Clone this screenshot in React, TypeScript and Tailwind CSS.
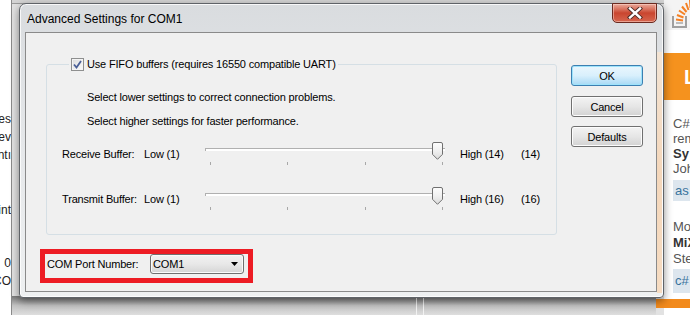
import React from "react";

function Thumb() {
  return (
    <svg width="11" height="18" viewBox="0 0 11 18" className="absolute left-[227px] top-0">
      <defs>
        <linearGradient id="thumbg" x1="0" y1="0" x2="0" y2="1">
          <stop offset="0" stopColor="#fdfdfd" />
          <stop offset="0.5" stopColor="#f0f0f0" />
          <stop offset="1" stopColor="#dadada" />
        </linearGradient>
      </defs>
      <path
        d="M2 0.5H9Q10.5 0.5 10.5 2V12.3L5.5 17.3L0.5 12.3V2Q0.5 0.5 2 0.5Z"
        fill="url(#thumbg)"
        stroke="#707070"
      />
    </svg>
  );
}

function Slider() {
  return (
    <div className="relative w-[240px] h-[24px]">
      <div className="mt-[6px] h-[3px] border-t border-l border-[#b0b0b0] bg-white" />
      <div className="ml-[5px] mt-[11px] flex w-[233px] justify-between">
        <div className="h-[3px] w-px bg-[#a8a8a8]" />
        <div className="h-[3px] w-px bg-[#a8a8a8]" />
        <div className="h-[3px] w-px bg-[#a8a8a8]" />
        <div className="h-[3px] w-px bg-[#a8a8a8]" />
      </div>
      <Thumb />
    </div>
  );
}

function Row({ label, high, val }: { label: string; high: string; val: string }) {
  return (
    <div className="flex h-[24px] items-start pl-[15px]">
      <div className="mt-[5px] w-[82px] leading-[14px]">{label}</div>
      <div className="mt-[5px] w-[61px] leading-[14px]">Low (1)</div>
      <Slider />
      <div className="ml-[15px] mt-[5px] w-[61px] leading-[14px]">{high}</div>
      <div className="mt-[5px] leading-[14px]">{val}</div>
    </div>
  );
}

function Btn({ children, primary }: { children: React.ReactNode; primary?: boolean }) {
  return (
    <div
      className={
        primary
          ? "flex h-[21px] w-[72px] items-center justify-center rounded-[3px] border border-[#3c7fb1] bg-gradient-to-b from-[#eaf6fd] via-[#d9f0fc] to-[#a7d9f5] shadow-[inset_0_0_0_1px_#9ee3fb]"
          : "flex h-[21px] w-[72px] items-center justify-center rounded-[3px] border border-[#707070] bg-gradient-to-b from-[#f3f3f3] via-[#e6e6e6] to-[#d2d2d2] shadow-[inset_0_0_0_1px_#fcfcfc]"
      }
    >
      <span className="leading-[14px]">{children}</span>
    </div>
  );
}

export default function App() {
  return (
    <div className="relative h-[315px] w-[690px] overflow-hidden bg-[#e2e2e2] font-['Liberation_Sans',Arial,sans-serif] text-[11px] tracking-[-0.17px] text-black">
      {/* top strip of window behind */}
      <div className="absolute left-[12px] right-0 top-0 h-[4px] border-b border-[#9a9a9a] bg-[#d4d4d4]" />

      {/* left window behind */}
      <div className="absolute left-0 top-0 flex h-full w-[12px] flex-col items-end overflow-hidden border-r border-[#8a8a8a] bg-white text-[12px] tracking-normal text-[#222]">
        <div className="mt-[111px] whitespace-nowrap leading-[16px]">es</div>
        <div className="mt-[2px] whitespace-nowrap leading-[16px]">ev</div>
        <div className="mt-[2px] whitespace-nowrap leading-[16px]">ntı</div>
        <div className="mt-[39px] whitespace-nowrap leading-[16px]">int</div>
        <div className="mt-[37px] whitespace-nowrap leading-[16px]">0</div>
        <div className="mt-[2px] whitespace-nowrap leading-[16px]">CO</div>
      </div>

      {/* right window behind */}
      <div className="absolute left-[664px] right-0 top-0 h-full bg-white text-[13px] tracking-normal">
        <div className="relative h-[30px] bg-[#f4f4f4]">
          <svg width="26" height="30" viewBox="0 0 26 30" className="absolute left-[4px] top-0">
            <path d="M5 16V27H18V16" fill="none" stroke="#a0a0a0" strokeWidth="2" />
            <path d="M8 23H15" stroke="#bcbbbb" strokeWidth="2" />
            <path d="M8 19.5L15 20.5" stroke="#f48024" strokeWidth="2" />
            <path d="M9 15L15.5 17.5" stroke="#f48024" strokeWidth="2" />
            <path d="M11 10.5L17 14.5" stroke="#f48024" strokeWidth="2" />
            <path d="M14 6.5L18.5 12" stroke="#f48024" strokeWidth="2" />
            <path d="M18 3L20.5 10" stroke="#f48024" strokeWidth="2" />
            <path d="M22 0L22.5 8" stroke="#f48024" strokeWidth="2" />
          </svg>
        </div>
        <div className="mt-[23px] h-[47px] bg-[#f5921e] pl-[20px] pt-[14px] text-[20px] font-bold leading-[20px] text-white">
          L
        </div>
        <div className="pl-[9px] pt-[16px] text-[#555]">
          <div className="leading-[15px]">C#</div>
          <div className="leading-[15px]">rem</div>
          <div className="font-bold leading-[15px] text-[#333]">Sy</div>
          <div className="leading-[15px]">Joh</div>
          <div className="mt-[4px] h-[21px] bg-[#dde6ee] pl-[2px] leading-[21px] text-[#39739d]">as</div>
          <div className="mt-[18px] leading-[16px]">Mo</div>
          <div className="font-bold leading-[16px] text-[#333]">MiX</div>
          <div className="leading-[16px]">Ste</div>
          <div className="mt-[2px] h-[24px] bg-[#dde6ee] pl-[2px] leading-[24px] text-[#39739d]">c#</div>
        </div>
      </div>
      {/* orange frame piece bottom right */}
      <div className="absolute left-[656px] right-0 top-[299px] h-[9px] bg-[#f28a1c]" />

      {/* bottom shadow area */}
      <div className="absolute left-[12px] right-[34px] top-[296px] bottom-0 bg-gradient-to-b from-[#7a7a7a] via-[#c2c2c2] to-[#dedede]">
        <div className="ml-[404px] flex h-full gap-[6px]">
          <div className="h-full w-px bg-[#f2f2f2]" />
          <div className="h-full w-px bg-[#f2f2f2]" />
        </div>
      </div>

      {/* dialog */}
      <div className="absolute left-[19px] top-[3px] flex h-[295px] w-[645px] flex-col rounded-t-[7px] rounded-b-[4px] border border-[#5f6368] bg-gradient-to-b from-[#d9dcdf] via-[#e6e8ea] to-[#eef0f1] shadow-[0_3px_8px_rgba(0,0,0,0.45),inset_0_0_0_1px_rgba(255,255,255,0.8)]">
        {/* orange tint from window behind */}
        <div className="absolute right-[1px] top-[48px] bottom-[4px] w-[5px] bg-gradient-to-b from-[#f3e4d4] via-[#f4d7bb] to-[#f6dcc2]" />
        {/* title bar */}
        <div className="flex h-[28px] items-center pl-[7px] pt-[1px]">
          <span className="text-[12px] tracking-normal text-black">Advanced Settings for COM1</span>
        </div>
        {/* close button */}
        <div className="absolute left-[592px] top-[-1px] flex h-[20px] w-[45px] items-center justify-center rounded-b-[5px] border border-[#6b2a20] bg-gradient-to-b from-[#e9a99b] via-[#c9452f] to-[#d6664f] shadow-[inset_0_0_0_1px_rgba(255,220,210,0.5)]">
          <svg width="16" height="12" viewBox="0 0 16 12">
            <path d="M3 1.5L13 10.5M13 1.5L3 10.5" stroke="#4a2a25" strokeWidth="4.2" strokeLinecap="square" />
            <path d="M3 1.5L13 10.5M13 1.5L3 10.5" stroke="#ffffff" strokeWidth="2.4" strokeLinecap="square" />
          </svg>
        </div>

        {/* client */}
        <div className="ml-[5px] mr-[6px] flex h-[260px] border border-[#8a8a8a] bg-[#f0f0f0]">
          <div className="flex flex-col pl-[14px] pt-[24px]">
            <fieldset className="ml-[6px] h-[178px] w-[511px] rounded-[3px] border border-[#d5dfe5]">
              <legend className="ml-[22px] flex items-center gap-[3px] px-[2px] leading-[14px]">
                <span className="flex h-[13px] w-[13px] items-center justify-center border border-[#8e8f8f] bg-gradient-to-br from-[#dcdcdc] to-[#fbfbfb] shadow-[inset_0_0_0_1px_#f4f4f4]">
                  <svg width="9" height="9" viewBox="0 0 9 9">
                    <path d="M1 4.5L3.5 7.5L8 1" fill="none" stroke="#4a5f97" strokeWidth="1.8" />
                  </svg>
                </span>
                <span>Use FIFO buffers (requires 16550 compatible UART)</span>
              </legend>
              <div className="pl-[40px] pt-[19px] leading-[14px]">
                <div>Select lower settings to correct connection problems.</div>
                <div className="mt-[10px]">Select higher settings for faster performance.</div>
              </div>
              <div className="mt-[14px]">
                <Row label="Receive Buffer:" high="High (14)" val="(14)" />
              </div>
              <div className="mt-[21px]">
                <Row label="Transmit Buffer:" high="High (16)" val="(16)" />
              </div>
            </fieldset>
            <div className="mt-[14px] flex h-[34px] w-[213px] items-start border-[5px] border-[#ed1c24] pl-[2px]">
              <div className="mt-[3px] w-[103px] leading-[14px]">COM Port Number:</div>
              <div className="flex h-[20px] w-[94px] items-center justify-between rounded-[3px] border border-[#707070] bg-gradient-to-b from-[#f2f2f2] via-[#e8e8e8] to-[#d5d5d5] pl-[2px] pr-[5px] shadow-[inset_0_0_0_1px_#fafafa]">
                <span className="leading-[14px]">COM1</span>
                <svg width="7" height="4" viewBox="0 0 7 4">
                  <path d="M0 0H7L3.5 4Z" fill="#000" />
                </svg>
              </div>
            </div>
          </div>
          <div className="ml-[14px] flex flex-col pt-[32px]">
            <Btn primary>OK</Btn>
            <div className="mt-[10px]">
              <Btn>Cancel</Btn>
            </div>
            <div className="mt-[9px]">
              <Btn>Defaults</Btn>
            </div>
          </div>
        </div>
      </div>
    </div>
  );
}
